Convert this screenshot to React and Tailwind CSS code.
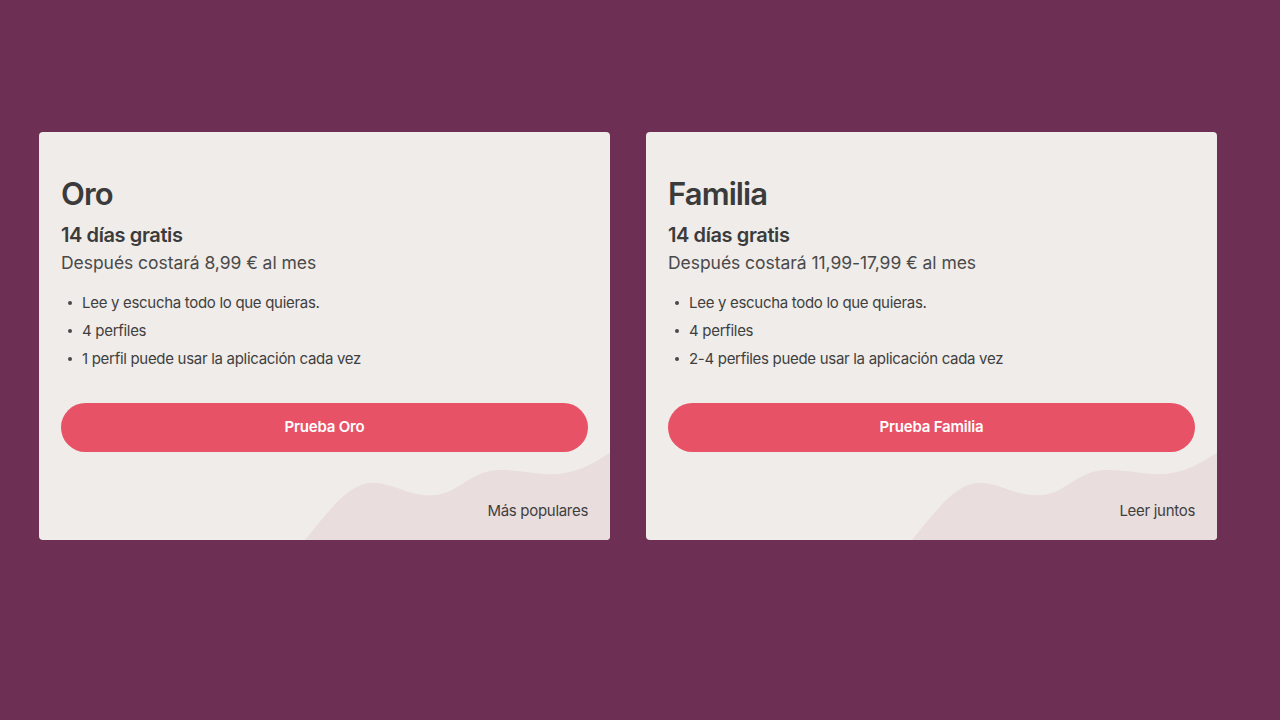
const plans = [
  {
    name: "Oro",
    price: "Después costará 8,99 € al mes",
    features: [
      "Lee y escucha todo lo que quieras.",
      "4 perfiles",
      "1 perfil puede usar la aplicación cada vez",
    ],
    cta: "Prueba Oro",
    tag: "Más populares",
  },
  {
    name: "Familia",
    price: "Después costará 11,99-17,99 € al mes",
    features: [
      "Lee y escucha todo lo que quieras.",
      "4 perfiles",
      "2-4 perfiles puede usar la aplicación cada vez",
    ],
    cta: "Prueba Familia",
    tag: "Leer juntos",
  },
];

function Wave() {
  return (
    <svg className="absolute inset-0 w-full h-full" viewBox="0 0 571 408" preserveAspectRatio="none">
      <path
        d="M266,408 C291,378 311,348 338,351 C361,354 371,365 396,363 C421,361 431,338 461,338 C491,338 506,346 531,340 C551,335 561,326 571,321 L571,408 Z"
        fill="#e9dddd"
      />
    </svg>
  );
}

function PlanCard({ plan }) {
  return (
    <div className="relative w-[571px] h-[408px] bg-[#efece9] rounded-[4px] overflow-hidden">
      <Wave />
      <div className="relative flex flex-col h-full px-[22px] pt-[42px] pb-[19px] text-[#3b3b3b]">
        <h2 className="text-[31px] leading-[40px] font-semibold tracking-[-0.9px]">{plan.name}</h2>
        <p className="mt-[8px] text-[20px] leading-[26px] font-semibold tracking-[-0.4px]">14 días gratis</p>
        <p className="mt-[2px] text-[17.5px] leading-[26px] text-[#4a4a4a] tracking-[-0.05px]">{plan.price}</p>
        <ul className="mt-[13px] flex flex-col text-[15px] leading-[28px] text-[#3f3f3f] tracking-[-0.3px]">
          {plan.features.map((f) => (
            <li key={f} className="flex items-center">
              <span className="w-[4px] h-[4px] rounded-full bg-[#4a4a4a] ml-[7px] mr-[10px]" />
              {f}
            </li>
          ))}
        </ul>
        <button className="mt-[30px] h-[49px] w-full rounded-full bg-[#e85266] text-white text-[15px] font-semibold tracking-[-0.2px]">
          {plan.cta}
        </button>
        <div className="mt-auto text-right text-[15px] leading-[20px] text-[#3f3f3f] tracking-[-0.3px]">{plan.tag}</div>
      </div>
    </div>
  );
}

export default function App() {
  return (
    <div className="w-[1280px] h-[720px] bg-[#6e2f55] pt-[132px] pl-[39px]" style={{ fontFamily: "Inter, 'Noto Sans', sans-serif" }}>
      <div className="flex gap-[36px]">
        {plans.map((p) => (
          <PlanCard key={p.name} plan={p} />
        ))}
      </div>
    </div>
  );
}
